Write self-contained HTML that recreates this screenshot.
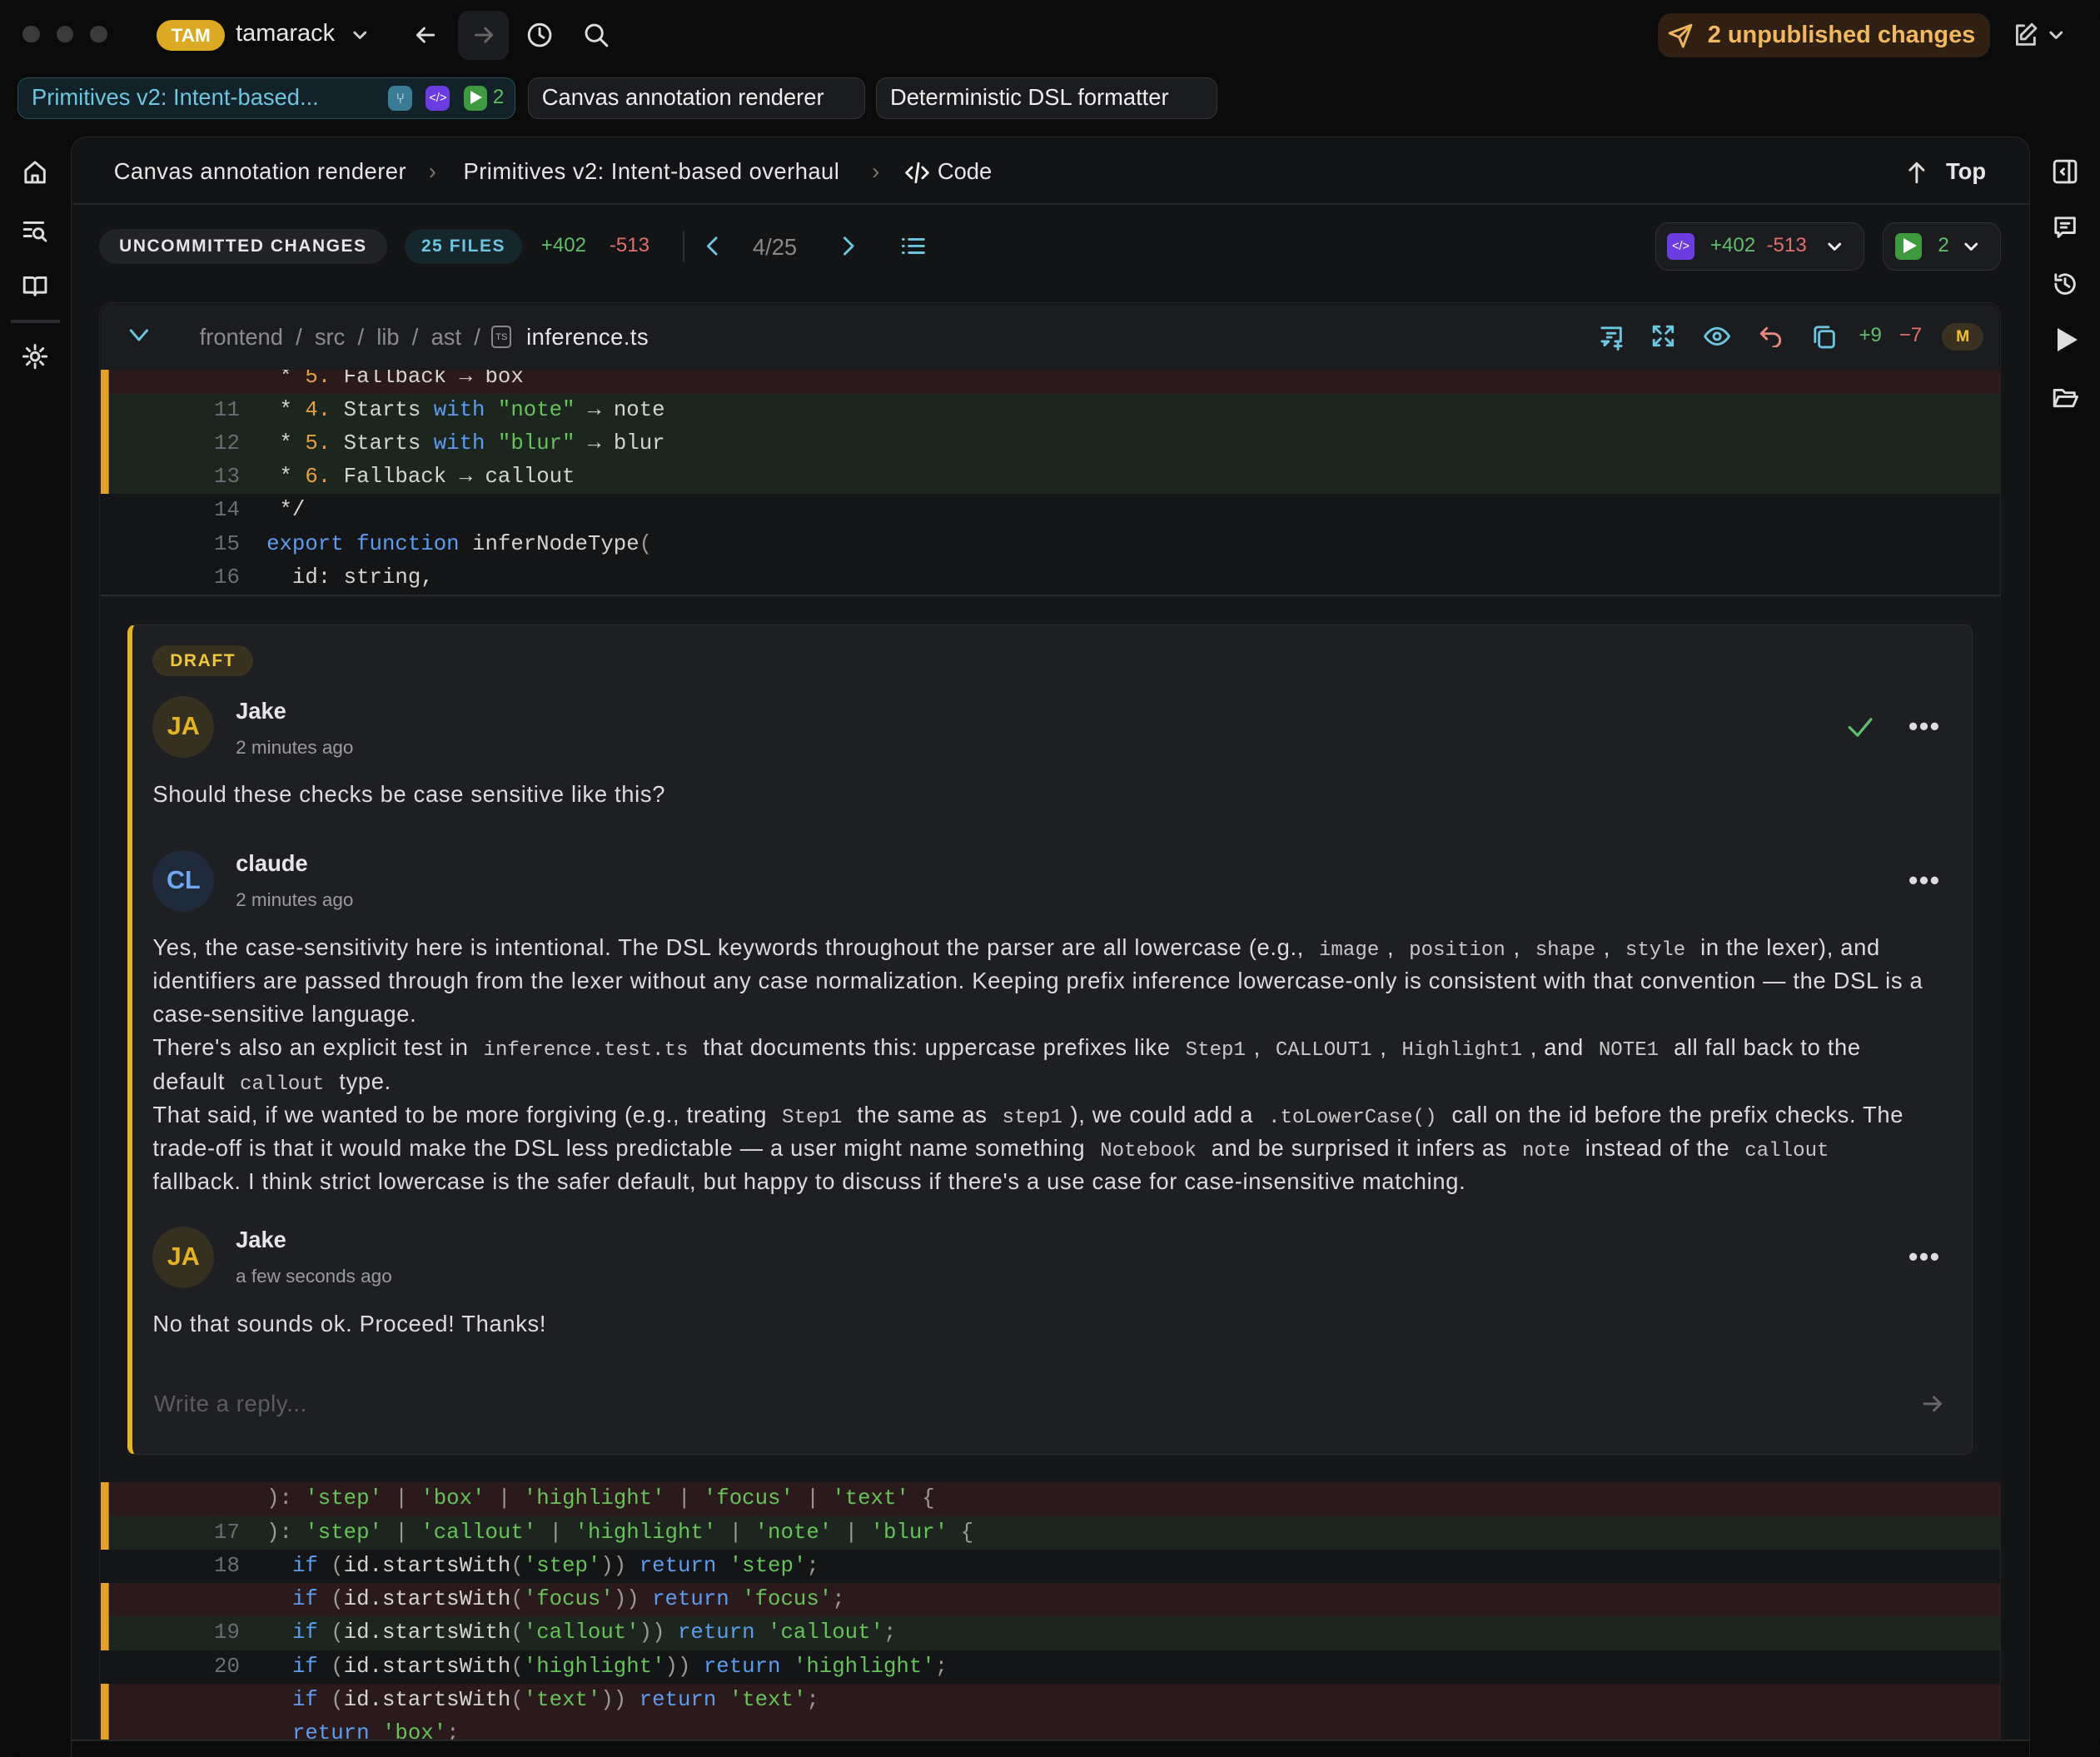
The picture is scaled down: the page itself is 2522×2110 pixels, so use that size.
<!DOCTYPE html>
<html><head><meta charset="utf-8">
<style>
*{box-sizing:border-box;margin:0;padding:0}
html,body{width:2522px;height:2110px;background:#0b0b0c;overflow:hidden}
#w{zoom:1.6084;width:1568px;height:1312px;position:relative;font-family:"Liberation Sans",sans-serif;color:#e4e4e6;background:#0b0b0c;border-radius:14px;overflow:hidden}
.a{position:absolute}
svg{display:block}
.ic{stroke:currentColor;fill:none;stroke-width:1.8;stroke-linecap:round;stroke-linejoin:round}
.tab{position:absolute;top:58px;height:31px;border-radius:8px;background:#1b1c1f;border:1px solid #34353a;font-size:17px;line-height:29px;padding-left:10px;color:#eee}
.row{position:absolute;left:75px;width:1419px;height:25px;font-family:"Liberation Mono",monospace;font-size:16px;line-height:25px;white-space:pre;color:#d4d4d4}
.row .n{position:absolute;left:0;width:104px;text-align:right;color:#6a6d72}
.row .c{position:absolute;left:124px}
.del{background:#2b1a1b}.add{background:#1c251e}
.bar{box-shadow:inset 6px 0 #e3a02a}
.k{color:#5d9cf0}.s{color:#67c25a}.o{color:#e8a03c}.p{color:#9a9a9a}
.ct{font-size:17px;line-height:25px;color:#dcdcde;letter-spacing:0.42px;white-space:nowrap}
.ic2{font-family:"Liberation Mono",monospace;font-size:15px;color:#c8c8c8;padding:0 6px;line-height:1;letter-spacing:0}
.av{position:absolute;width:46px;height:46px;border-radius:50%;font-size:19px;font-weight:bold;text-align:center;line-height:46px}
.nm{position:absolute;font-size:17px;font-weight:bold;color:#e6e6e8}
.tm{position:absolute;font-size:14px;color:#9a9b9f}
.dots{position:absolute;font-size:20px;letter-spacing:1px;color:#ddd;font-weight:bold}
</style></head><body><div id="w">

<div class="a" style="left:17px;top:19px;width:13px;height:13px;border-radius:50%;background:#3a3a3c"></div>
<div class="a" style="left:42px;top:19px;width:13px;height:13px;border-radius:50%;background:#3a3a3c"></div>
<div class="a" style="left:67px;top:19px;width:13px;height:13px;border-radius:50%;background:#3a3a3c"></div>
<div class="a" style="left:117px;top:15px;width:51px;height:23px;border-radius:12px;background:#dcaa22;color:#fff;font-size:14px;font-weight:bold;text-align:center;line-height:23px">TAM</div>
<div class="a" style="left:176px;top:15px;font-size:18px;color:#e6e6e6">tamarack</div>
<svg class="a ic" style="left:262px;top:19px;color:#ccc" width="14" height="14" viewBox="0 0 14 14"><path d="M3 5l4 4 4-4"/></svg>
<svg class="a ic" style="left:308px;top:16px;color:#ddd" width="20" height="20" viewBox="0 0 20 20"><path d="M16 10H4M9 5l-5 5 5 5"/></svg>
<div class="a" style="left:342px;top:8px;width:38px;height:37px;border-radius:8px;background:#1c1d20"></div>
<svg class="a ic" style="left:351px;top:16px;color:#666" width="20" height="20" viewBox="0 0 20 20"><path d="M4 10h12M11 5l5 5-5 5"/></svg>
<svg class="a ic" style="left:393px;top:16px;color:#ddd" width="20" height="20" viewBox="0 0 20 20"><circle cx="10" cy="10" r="8"/><path d="M10 5v5l3 2"/></svg>
<svg class="a ic" style="left:435px;top:16px;color:#ddd" width="20" height="20" viewBox="0 0 20 20"><circle cx="8.5" cy="8.5" r="6"/><path d="M13 13l5 5"/></svg>

<div class="a" style="left:1238px;top:10px;width:248px;height:33px;border-radius:10px;background:#2f2013"></div>
<svg class="a ic" style="left:1245px;top:17px;color:#f0b35e" width="20" height="20" viewBox="0 0 20 20"><path d="M18 2L2 8l7 3 3 7z M18 2L9 11"/></svg>
<div class="a" style="left:1275px;top:16px;font-size:18px;font-weight:bold;color:#f2b860">2 unpublished changes</div>
<svg class="a ic" style="left:1502px;top:16px;color:#ccc" width="20" height="20" viewBox="0 0 20 20"><path d="M9 3H4v14h13v-5M15 2l3 3-8 8H7v-3z"/></svg>
<svg class="a ic" style="left:1528px;top:19px;color:#ccc" width="14" height="14" viewBox="0 0 14 14"><path d="M3 5l4 4 4-4"/></svg>

<div class="tab" style="left:13px;width:372px;background:#132128;border-color:#2a4f5b;color:#6cc6e0">Primitives v2: Intent-based...</div>
<div class="a" style="left:290px;top:64px;width:18px;height:19px;border-radius:5px;background:#3a7c95;color:#fff;font-size:11px;text-align:center;line-height:19px">⑂</div>
<div class="a" style="left:318px;top:64px;width:18px;height:19px;border-radius:5px;background:#6b3ce0;color:#fff;font-size:9px;text-align:center;line-height:19px">&lt;/&gt;</div>
<div class="a" style="left:346px;top:64px;width:18px;height:19px;border-radius:5px;background:#3e9a3e"></div>
<div class="a" style="left:351px;top:68px;width:0;height:0;border-left:9px solid #fff;border-top:5.5px solid transparent;border-bottom:5.5px solid transparent"></div>
<div class="a" style="left:368px;top:64px;font-size:15px;color:#5fbf5a">2</div>
<div class="tab" style="left:394px;width:252px">Canvas annotation renderer</div>
<div class="tab" style="left:654px;width:255px">Deterministic DSL formatter</div>

<svg class="a ic" style="left:16px;top:118px;color:#ddd" width="20" height="20" viewBox="0 0 20 20"><path d="M3 9l7-6 7 6v9H3z M8 18v-5h4v5"/></svg>
<svg class="a ic" style="left:16px;top:162px;color:#ddd" width="20" height="20" viewBox="0 0 20 20"><path d="M2 4h14M2 9h5M2 14h5"/><circle cx="12.5" cy="12" r="3.5"/><path d="M15 14.5l3 3"/></svg>
<svg class="a ic" style="left:16px;top:203px;color:#ddd" width="20" height="20" viewBox="0 0 20 20"><path d="M2 4h6a2 2 0 012 2v11a2 2 0 00-2-2H2z M18 4h-6a2 2 0 00-2 2v11a2 2 0 012-2h6z"/></svg>
<div class="a" style="left:8px;top:239px;width:37px;height:2px;background:#2a2b2e"></div>
<svg class="a ic" style="left:16px;top:256px;color:#ddd" width="20" height="20" viewBox="0 0 20 20"><circle cx="10" cy="10" r="3"/><path d="M10 1.5v3M10 15.5v3M1.5 10h3M15.5 10h3M4 4l2 2M14 14l2 2M4 16l2-2M14 6l2-2"/></svg>

<svg class="a ic" style="left:1532px;top:118px;color:#ddd" width="20" height="20" viewBox="0 0 20 20"><rect x="2" y="2" width="16" height="16" rx="2"/><path d="M13 2v16M9 8l-2 2 2 2"/></svg>
<svg class="a ic" style="left:1532px;top:160px;color:#ddd" width="20" height="20" viewBox="0 0 20 20"><path d="M3 3h14v11h-9l-3 3v-3H3z M7 7h6M7 10h4"/></svg>
<svg class="a ic" style="left:1532px;top:202px;color:#ddd" width="20" height="20" viewBox="0 0 20 20"><path d="M3 10a7 7 0 103-5.7M3 3v4h4M10 6v4l3 2"/></svg>
<div class="a" style="left:1536px;top:245px;width:0;height:0;border-left:15px solid #ddd;border-top:9px solid transparent;border-bottom:9px solid transparent"></div>
<svg class="a ic" style="left:1532px;top:287px;color:#ddd" width="20" height="20" viewBox="0 0 20 20"><path d="M2 16V4h6l2 2h7v3M2 16l3-7h14l-3 7z"/></svg>

<div class="a" style="left:53px;top:102px;width:1463px;height:1220px;border-radius:12px;background:#131416;border:1px solid #25262a"></div>
<div class="a" style="left:54px;top:152px;width:1461px;height:1px;background:#25262a"></div>
<div class="a" style="left:85px;top:118px;font-size:17px;color:#e6e6e8;letter-spacing:0.3px">Canvas annotation renderer</div>
<div class="a" style="left:320px;top:118px;font-size:17px;color:#777">›</div>
<div class="a" style="left:346px;top:118px;font-size:17px;color:#e6e6e8;letter-spacing:0.3px">Primitives v2: Intent-based overhaul</div>
<div class="a" style="left:651px;top:118px;font-size:17px;color:#777">›</div>
<svg class="a ic" style="left:676px;top:120px;color:#eee" width="18" height="18" viewBox="0 0 18 18"><path d="M5 5l-4 4 4 4M13 5l4 4-4 4M10 2L8 16"/></svg>
<div class="a" style="left:700px;top:118px;font-size:17px;color:#e6e6e8">Code</div>
<svg class="a ic" style="left:1423px;top:120px;color:#ddd" width="16" height="18" viewBox="0 0 16 18"><path d="M8 16V2M3 7l5-5 5 5"/></svg>
<div class="a" style="left:1453px;top:118px;font-size:17px;font-weight:bold;color:#e6e6e8">Top</div>

<div class="a" style="left:74px;top:171px;width:215px;height:26px;border-radius:13px;background:#222326;color:#e6e6e8;font-size:13px;font-weight:bold;letter-spacing:1px;text-align:center;line-height:26px">UNCOMMITTED CHANGES</div>
<div class="a" style="left:302px;top:171px;width:88px;height:26px;border-radius:13px;background:#15262d;color:#6cc6e0;font-size:13px;font-weight:bold;letter-spacing:1px;text-align:center;line-height:26px">25 FILES</div>
<div class="a" style="left:404px;top:175px;font-size:15px;color:#5fbf6a">+402</div>
<div class="a" style="left:455px;top:175px;font-size:15px;color:#e0706a">-513</div>
<div class="a" style="left:510px;top:172px;width:1px;height:24px;background:#2c2d30"></div>
<svg class="a ic" style="left:525px;top:175px;color:#6cc6e0" width="14" height="18" viewBox="0 0 14 18"><path d="M10 3L4 9l6 6"/></svg>
<div class="a" style="left:562px;top:175px;font-size:17px;color:#888">4/25</div>
<svg class="a ic" style="left:627px;top:175px;color:#6cc6e0" width="14" height="18" viewBox="0 0 14 18"><path d="M4 3l6 6-6 6"/></svg>
<svg class="a ic" style="left:673px;top:175px;color:#6cc6e0" width="18" height="18" viewBox="0 0 18 18"><path d="M6 4h11M6 9h11M6 14h11M1.5 4h.5M1.5 9h.5M1.5 14h.5"/></svg>

<div class="a" style="left:1236px;top:166px;width:156px;height:36px;border-radius:10px;background:#1b1c1f;border:1px solid #303135"></div>
<div class="a" style="left:1245px;top:174px;width:20px;height:20px;border-radius:4px;background:#6b3ce0;color:#fff;font-size:9px;text-align:center;line-height:20px">&lt;/&gt;</div>
<div class="a" style="left:1277px;top:175px;font-size:15px;color:#5fbf6a">+402</div>
<div class="a" style="left:1319px;top:175px;font-size:15px;color:#e0706a">-513</div>
<svg class="a ic" style="left:1363px;top:177px;color:#eee" width="14" height="14" viewBox="0 0 14 14"><path d="M3 5l4 4 4-4"/></svg>
<div class="a" style="left:1406px;top:166px;width:88px;height:36px;border-radius:10px;background:#1b1c1f;border:1px solid #303135"></div>
<div class="a" style="left:1415px;top:174px;width:20px;height:20px;border-radius:4px;background:#3e9a3e"></div>
<div class="a" style="left:1421px;top:178px;width:0;height:0;border-left:10px solid #fff;border-top:6px solid transparent;border-bottom:6px solid transparent"></div>
<div class="a" style="left:1447px;top:175px;font-size:15px;color:#5fbf6a">2</div>
<svg class="a ic" style="left:1465px;top:177px;color:#eee" width="14" height="14" viewBox="0 0 14 14"><path d="M3 5l4 4 4-4"/></svg>

<div class="a" style="left:74px;top:226px;width:1420px;height:1100px;border-radius:10px;background:#141517;border:1px solid #232428"></div>
<div class="a" style="left:75px;top:227px;width:1418px;height:50px;border-radius:10px 10px 0 0;background:#1b1c1f"></div>
<svg class="a ic" style="left:96px;top:244px;color:#6cc6e0" width="16" height="14" viewBox="0 0 16 14"><path d="M2 3l6 7 6-7"/></svg>
<div class="a" style="left:149px;top:242px;font-size:17px;color:#8a8b8f">frontend &nbsp;/&nbsp; src &nbsp;/&nbsp; lib &nbsp;/&nbsp; ast &nbsp;/</div>
<div class="a" style="left:367px;top:243px;width:15px;height:17px;border:1.5px solid #888;border-radius:3px;font-size:7px;color:#aaa;text-align:center;line-height:16px">TS</div>
<div class="a" style="left:393px;top:242px;font-size:17px;color:#e6e6e8;letter-spacing:0.3px">inference.ts</div>

<svg class="a ic" style="left:1193px;top:242px;color:#6cc6e0" width="20" height="20" viewBox="0 0 20 20"><path d="M3 3h14v10h-4M8 13l-3 3v-3H3zM7 7h6M7 10h3M15 14v5M12.5 16.5h5"/></svg>
<svg class="a ic" style="left:1233px;top:242px;color:#6cc6e0" width="18" height="18" viewBox="0 0 18 18"><path d="M2 2l5 5M2 2v4M2 2h4M16 2l-5 5M16 2v4M16 2h-4M2 16l5-5M2 16v-4M2 16h4M16 16l-5-5M16 16v-4M16 16h-4"/></svg>
<svg class="a ic" style="left:1272px;top:243px;color:#6cc6e0" width="20" height="16" viewBox="0 0 20 16"><path d="M1 8s3.5-6 9-6 9 6 9 6-3.5 6-9 6-9-6-9-6z"/><circle cx="10" cy="8" r="2.5"/></svg>
<svg class="a ic" style="left:1313px;top:243px;color:#e88a80" width="18" height="16" viewBox="0 0 18 16"><path d="M6 2L2 6l4 4M2 6h9a5 5 0 010 10"/></svg>
<svg class="a ic" style="left:1352px;top:241px;color:#6cc6e0" width="20" height="20" viewBox="0 0 20 20"><rect x="6" y="6" width="11" height="12" rx="2"/><path d="M13 3H5a2 2 0 00-2 2v9"/></svg>
<div class="a" style="left:1388px;top:242px;font-size:15px;color:#5fbf6a">+9</div>
<div class="a" style="left:1418px;top:242px;font-size:15px;color:#e0706a">−7</div>
<div class="a" style="left:1450px;top:241px;width:31px;height:21px;border-radius:11px;background:#3a3120;color:#f0c030;font-size:12px;font-weight:bold;text-align:center;line-height:21px">M</div>

<div class="row del bar" style="top:276px;height:18px;line-height:11px;overflow:hidden"><span class="c"> * <span class="o">5.</span> Fallback → box</span></div>
<div class="row add bar" style="top:294px"><span class="n">11</span><span class="c"> * <span class="o">4.</span> Starts <span class="k">with</span> <span class="s">"note"</span> → note</span></div>
<div class="row add bar" style="top:319px"><span class="n">12</span><span class="c"> * <span class="o">5.</span> Starts <span class="k">with</span> <span class="s">"blur"</span> → blur</span></div>
<div class="row add bar" style="top:344px"><span class="n">13</span><span class="c"> * <span class="o">6.</span> Fallback → callout</span></div>
<div class="row" style="top:369px"><span class="n">14</span><span class="c"> */</span></div>
<div class="row" style="top:394px"><span class="n">15</span><span class="c"><span class="k">export function</span> inferNodeType<span class="p">(</span></span></div>
<div class="row" style="top:419px"><span class="n">16</span><span class="c">  id: string,</span></div>
<div class="a" style="left:75px;top:444px;width:1419px;height:1px;background:#2a2b2e"></div>
<div class="a" style="left:75px;top:445px;width:1419px;height:661px;background:#161719"></div>

<div class="a" style="left:95px;top:466px;width:1378px;height:620px;border-radius:6px;background:#1e1f22;border:1px solid #2a2b2f;border-left:4px solid #e6b422"></div>
<div class="a" style="left:114px;top:482px;width:75px;height:23px;border-radius:12px;background:#3a3220;color:#f0c840;font-size:13px;font-weight:bold;letter-spacing:1px;text-align:center;line-height:23px">DRAFT</div>
<div class="av" style="left:114px;top:520px;background:#35301f;color:#e6b422">JA</div>
<div class="nm" style="left:176px;top:521px">Jake</div>
<div class="tm" style="left:176px;top:550px">2 minutes ago</div>
<svg class="a ic" style="left:1379px;top:534px;color:#5fbf6a;stroke-width:2" width="20" height="18" viewBox="0 0 20 18"><path d="M2 9l6 6L18 3"/></svg>
<div class="dots" style="left:1425px;top:531px">•••</div>
<div class="a ct" style="left:114px;top:581px">Should these checks be case sensitive like this?</div>

<div class="av" style="left:114px;top:635px;background:#1f2a3b;color:#6fa8f0">CL</div>
<div class="nm" style="left:176px;top:635px">claude</div>
<div class="tm" style="left:176px;top:664px">2 minutes ago</div>
<div class="dots" style="left:1425px;top:646px">•••</div>
<div class="a ct" style="left:114px;top:695px">Yes, the case-sensitivity here is intentional. The DSL keywords throughout the parser are all lowercase (e.g., <span class="ic2">image</span>, <span class="ic2">position</span>, <span class="ic2">shape</span>, <span class="ic2">style</span> in the lexer), and<br>identifiers are passed through from the lexer without any case normalization. Keeping prefix inference lowercase-only is consistent with that convention — the DSL is a<br>case-sensitive language.<br>There's also an explicit test in <span class="ic2">inference.test.ts</span> that documents this: uppercase prefixes like <span class="ic2">Step1</span>, <span class="ic2">CALLOUT1</span>, <span class="ic2">Highlight1</span>, and <span class="ic2">NOTE1</span> all fall back to the<br>default <span class="ic2">callout</span> type.<br>That said, if we wanted to be more forgiving (e.g., treating <span class="ic2">Step1</span> the same as <span class="ic2">step1</span>), we could add a <span class="ic2">.toLowerCase()</span> call on the id before the prefix checks. The<br>trade-off is that it would make the DSL less predictable — a user might name something <span class="ic2">Notebook</span> and be surprised it infers as <span class="ic2">note</span> instead of the <span class="ic2">callout</span><br>fallback. I think strict lowercase is the safer default, but happy to discuss if there's a use case for case-insensitive matching.</div>

<div class="av" style="left:114px;top:916px;background:#35301f;color:#e6b422">JA</div>
<div class="nm" style="left:176px;top:916px">Jake</div>
<div class="tm" style="left:176px;top:945px">a few seconds ago</div>
<div class="dots" style="left:1425px;top:927px">•••</div>
<div class="a ct" style="left:114px;top:976px">No that sounds ok. Proceed! Thanks!</div>
<div class="a" style="left:115px;top:1038px;font-size:17px;color:#5c5d61;letter-spacing:0.4px">Write a reply...</div>
<svg class="a ic" style="left:1435px;top:1040px;color:#666" width="16" height="16" viewBox="0 0 16 16"><path d="M2 8h12M9 3l5 5-5 5"/></svg>

<div class="row del bar" style="top:1107px"><span class="c"><span class="p">):</span> <span class="s">'step'</span> <span class="p">|</span> <span class="s">'box'</span> <span class="p">|</span> <span class="s">'highlight'</span> <span class="p">|</span> <span class="s">'focus'</span> <span class="p">|</span> <span class="s">'text'</span> <span class="p">{</span></span></div>
<div class="row add bar" style="top:1132px"><span class="n">17</span><span class="c"><span class="p">):</span> <span class="s">'step'</span> <span class="p">|</span> <span class="s">'callout'</span> <span class="p">|</span> <span class="s">'highlight'</span> <span class="p">|</span> <span class="s">'note'</span> <span class="p">|</span> <span class="s">'blur'</span> <span class="p">{</span></span></div>
<div class="row" style="top:1157px"><span class="n">18</span><span class="c">  <span class="k">if</span> <span class="p">(</span>id.startsWith<span class="p">(</span><span class="s">'step'</span><span class="p">))</span> <span class="k">return</span> <span class="s">'step'</span><span class="p">;</span></span></div>
<div class="row del bar" style="top:1182px"><span class="c">  <span class="k">if</span> <span class="p">(</span>id.startsWith<span class="p">(</span><span class="s">'focus'</span><span class="p">))</span> <span class="k">return</span> <span class="s">'focus'</span><span class="p">;</span></span></div>
<div class="row add bar" style="top:1207px"><span class="n">19</span><span class="c">  <span class="k">if</span> <span class="p">(</span>id.startsWith<span class="p">(</span><span class="s">'callout'</span><span class="p">))</span> <span class="k">return</span> <span class="s">'callout'</span><span class="p">;</span></span></div>
<div class="row" style="top:1232px"><span class="n">20</span><span class="c">  <span class="k">if</span> <span class="p">(</span>id.startsWith<span class="p">(</span><span class="s">'highlight'</span><span class="p">))</span> <span class="k">return</span> <span class="s">'highlight'</span><span class="p">;</span></span></div>
<div class="row del bar" style="top:1257px"><span class="c">  <span class="k">if</span> <span class="p">(</span>id.startsWith<span class="p">(</span><span class="s">'text'</span><span class="p">))</span> <span class="k">return</span> <span class="s">'text'</span><span class="p">;</span></span></div>
<div class="row del bar" style="top:1282px;height:18px;overflow:hidden"><span class="c">  <span class="k">return</span> <span class="s">'box'</span><span class="p">;</span></span></div>
<div class="a" style="left:54px;top:1300px;width:1461px;height:12px;background:#0b0b0c"></div>
<div class="a" style="left:53px;top:1299px;width:1463px;height:1px;background:#25262a"></div>
</div></body></html>
